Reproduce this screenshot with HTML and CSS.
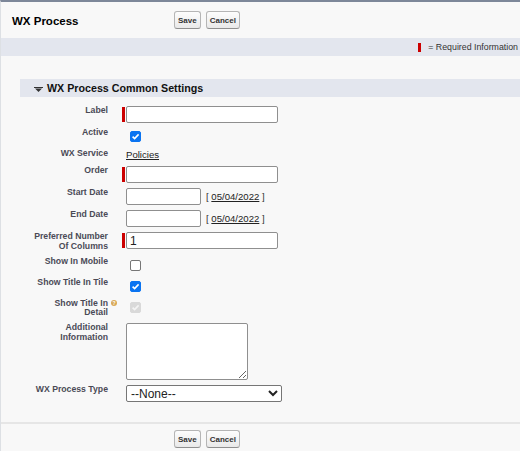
FILE: index.html
```html
<!DOCTYPE html>
<html>
<head>
<meta charset="utf-8">
<title>WX Process</title>
<link rel="stylesheet" href="styles.css">
</head>
<body>
<div class="page">
  <div class="bar-row head">
    <h2 class="title">WX Process</h2>
    <div class="btns">
      <button class="btn" type="button">Save</button>
      <button class="btn" type="button">Cancel</button>
    </div>
  </div>
  <div class="reqbar"><span class="reqmark"></span>= Required Information</div>

  <div class="section">
    <div class="sechead">
      <svg class="twisty" width="9" height="5" viewBox="0 0 9 5"><rect x="0" y="0" width="9" height="1" fill="#333"/><polygon points="1,1.5 8,1.5 4.5,5" fill="#333"/></svg>
      <span>WX Process Common Settings</span>
    </div>

    <div class="form">
      <div class="lbl">Label</div>
      <div class="fld req"><span class="rq"></span><input class="txt" type="text"></div>

      <div class="lbl">Active</div>
      <div class="fld"><span class="cb on"><svg width="11" height="11" viewBox="0 0 11 11"><polyline points="2.6,5.6 4.6,7.6 8.6,3.4" fill="none" stroke="#fff" stroke-width="1.6"/></svg></span></div>

      <div class="lbl">WX Service</div>
      <div class="fld plain"><a class="lnk" href="#">Policies</a></div>

      <div class="lbl">Order</div>
      <div class="fld req"><span class="rq"></span><input class="txt" type="text"></div>

      <div class="lbl">Start Date</div>
      <div class="fld date"><input class="txt short" type="text"><span class="dl">[ <a href="#">05/04/2022</a> ]</span></div>

      <div class="lbl">End Date</div>
      <div class="fld date"><input class="txt short" type="text"><span class="dl">[ <a href="#">05/04/2022</a> ]</span></div>

      <div class="lbl">Preferred Number<br>Of Columns</div>
      <div class="fld req"><span class="rq"></span><input class="txt" type="text" value="1"></div>

      <div class="lbl">Show In Mobile</div>
      <div class="fld"><span class="cb"></span></div>

      <div class="lbl">Show Title In Tile</div>
      <div class="fld"><span class="cb on"><svg width="11" height="11" viewBox="0 0 11 11"><polyline points="2.6,5.6 4.6,7.6 8.6,3.4" fill="none" stroke="#fff" stroke-width="1.6"/></svg></span></div>

      <div class="lbl help-lbl">Show Title In<span class="help"><svg width="6" height="6" viewBox="0 0 6 6"><circle cx="3" cy="3" r="3" fill="#d9a957"/><text x="3" y="5" font-size="5" font-family="Liberation Sans, Arial, sans-serif" font-weight="bold" text-anchor="middle" fill="#fff">?</text></svg></span><br>Detail</div>
      <div class="fld"><span class="cb dis"><svg width="11" height="11" viewBox="0 0 11 11"><polyline points="2.6,5.6 4.6,7.6 8.6,3.4" fill="none" stroke="#f4f4f4" stroke-width="1.6"/></svg></span></div>

      <div class="lbl">Additional<br>Information</div>
      <div class="fld"><textarea class="ta"></textarea></div>

      <div class="lbl">WX Process Type</div>
      <div class="fld"><select class="sel"><option>--None--</option></select></div>
    </div>
  </div>

  <div class="bar-row foot">
    <div class="title"></div>
    <div class="btns">
      <button class="btn" type="button">Save</button>
      <button class="btn" type="button">Cancel</button>
    </div>
  </div>
</div>
</body>
</html>
```

FILE: styles.css
```css
* { box-sizing: border-box; }

html, body {
  margin: 0;
  padding: 0;
  background: #f8f8f8;
}

body {
  font-family: "Liberation Sans", Arial, sans-serif;
  color: #333;
}

.page {
  width: 520px;
  height: 451px;
  border-top: 2px solid #7d8799;
  border-left: 1px solid #dde0e4;
  overflow: hidden;
}

.bar-row {
  display: flex;
  align-items: center;
}

.head {
  height: 36px;
}

.title {
  width: 173px;
  flex: none;
  margin: 0;
  padding: 2px 0 0 11px;
  font-size: 11.5px;
  line-height: 14px;
  font-weight: bold;
  color: #000;
}

.btns {
  display: flex;
  gap: 5px;
}

.btn {
  height: 18px;
  padding: 0 3px;
  margin: 0;
  font-family: "Liberation Sans", Arial, sans-serif;
  font-size: 8px;
  font-weight: bold;
  color: #333;
  border: 1px solid #b5b5b5;
  border-bottom-color: #8f8f8f;
  border-radius: 3px;
  background: linear-gradient(#fdfdfd, #e9e9e9);
}

.reqbar {
  height: 18px;
  background: #e3e6ee;
  display: flex;
  justify-content: flex-end;
  align-items: center;
  padding-right: 2px;
  font-size: 8.8px;
  color: #333;
}

.reqmark {
  width: 3px;
  height: 9px;
  background: #c00;
  margin-right: 7px;
}

.section {
  margin: 23px 0 0 19px;
  padding-bottom: 20px;
}

.sechead {
  height: 18px;
  background: #e3e6ee;
  display: flex;
  align-items: center;
  padding-left: 14px;
  font-size: 10.7px;
  font-weight: bold;
  color: #111;
}

.twisty {
  margin: 3px 4px 0 0;
  flex: none;
}

.form {
  margin-top: 9px;
  display: grid;
  grid-template-columns: 88px 1fr;
  column-gap: 14px;
  row-gap: 5.2px;
  align-items: start;
}

.lbl {
  text-align: right;
  font-size: 8.7px;
  line-height: 9.6px;
  font-weight: bold;
  color: #4a4a56;
}

.help-lbl {
  position: relative;
}

.help {
  position: absolute;
  right: -9px;
  top: 1.5px;
  width: 6px;
  height: 6px;
  line-height: 0;
}

.fld {
  display: flex;
  align-items: flex-start;
  padding-left: 4px;
}

.fld.req {
  padding-left: 0;
  align-items: center;
}

.rq {
  width: 3px;
  height: 15px;
  background: #c00;
  margin-right: 1px;
  flex: none;
}

.txt {
  width: 152px;
  height: 17px;
  margin: 0;
  padding: 0 3px;
  border: 1px solid #8f8f8f;
  border-radius: 2px;
  background: #fff;
  font-family: "Liberation Sans", Arial, sans-serif;
  font-size: 12px;
  color: #222;
}

.txt.short {
  width: 75px;
}

.date {
  align-items: center;
}

.dl {
  margin-left: 5px;
  font-size: 9.6px;
  color: #333;
}

.dl a, .lnk {
  color: #222;
  text-decoration: underline;
}

.plain {
  font-size: 9.6px;
  line-height: 11px;
}

.cb {
  display: block;
  width: 11px;
  height: 11px;
  margin: 3px 0 2px 3.5px;
  border: 1px solid #767676;
  border-radius: 2px;
  background: #fff;
  position: relative;
}

.cb svg {
  position: absolute;
  left: -1px;
  top: -1px;
}

.cb.on {
  background: #0b74f1;
  border-color: #0b74f1;
}

.cb.dis {
  background: #d9d9d9;
  border-color: #d9d9d9;
}

.ta {
  display: block;
  width: 122px;
  height: 57px;
  margin: 0;
  border: 1px solid #8f8f8f;
  border-radius: 2px;
  background: #fff;
}

.sel {
  width: 156px;
  height: 17px;
  margin: 0;
  padding: 0;
  border: 1px solid #767676;
  border-radius: 2px;
  background: #fff;
  font-family: "Liberation Sans", Arial, sans-serif;
  font-size: 12px;
  color: #222;
}

.foot {
  border-top: 2px solid #e6e6e6;
  padding-top: 6px;
  align-items: flex-start;
}

.foot .title {
  padding: 0;
}
```
